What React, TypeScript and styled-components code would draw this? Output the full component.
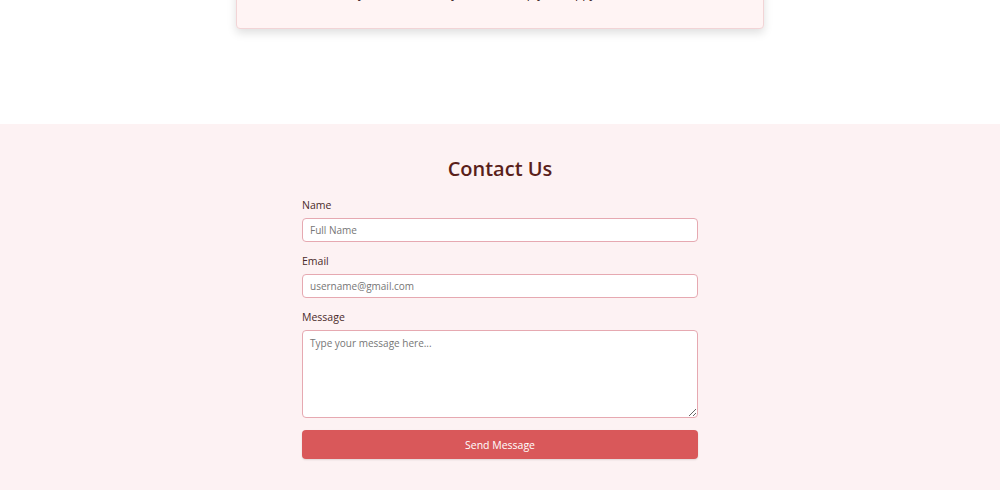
import React from "react";
import styled, { createGlobalStyle } from "styled-components";

const Global = createGlobalStyle`
  html, body { margin: 0; padding: 0; background: #ffffff; }
  body { font-family: "Open Sans", "Noto Sans", sans-serif; overflow: hidden; }
  * { box-sizing: border-box; }
`;

const Page = styled.div`
  display: flex;
  flex-direction: column;
  margin-top: -109px;
`;

const TopArea = styled.section`
  display: flex;
  justify-content: center;
  padding-bottom: 95px;
`;

const Card = styled.div`
  width: 528px;
  height: 138px;
  background: #fff4f4;
  border: 1px solid #f2d4d6;
  border-radius: 4px;
  box-shadow: 0 4px 10px rgba(0, 0, 0, 0.13);
  display: flex;
  flex-direction: column;
  justify-content: flex-end;
  align-items: center;
  padding: 0 20px 26px;
`;

const CardText = styled.p`
  margin: 0;
  font-size: 12px;
  line-height: 16px;
  color: #3b2222;
  text-align: center;
  white-space: nowrap;
`;

const ContactSection = styled.section`
  background: #fdf2f3;
  padding: 32px 0 40px;
  display: flex;
  flex-direction: column;
  align-items: center;
`;

const Title = styled.h2`
  margin: 0 0 15px;
  font-size: 20px;
  line-height: 26px;
  font-weight: 600;
  color: #5a1f1a;
`;

const Form = styled.form`
  width: 396px;
  display: flex;
  flex-direction: column;
`;

const Field = styled.div`
  display: flex;
  flex-direction: column;
  margin-bottom: 11px;
`;

const Label = styled.label`
  font-size: 10.5px;
  line-height: 16px;
  color: #4a2a2a;
  margin-bottom: 5px;
`;

const inputBase = `
  width: 100%;
  border: 1px solid #e6a9b1;
  border-radius: 4px;
  background: #ffffff;
  font-family: "Open Sans", "Noto Sans", sans-serif;
  font-size: 10px;
  color: #333;
  padding: 0 7px;
  outline: none;
  &::placeholder { color: #767676; }
`;

const Input = styled.input`
  ${inputBase}
  height: 24px;
`;

const TextArea = styled.textarea`
  ${inputBase}
  display: block;
  height: 88px;
  padding-top: 5px;
  resize: vertical;
`;

const Button = styled.button`
  height: 29px;
  margin-top: 1px;
  border: none;
  border-radius: 4px;
  background: #d9585a;
  color: #ffffff;
  font-family: "Open Sans", "Noto Sans", sans-serif;
  font-size: 10.5px;
  cursor: pointer;
  box-shadow: 0 1px 2px rgba(0, 0, 0, 0.12);
`;

export default function App() {
  return (
    <>
      <Global />
      <Page>
        <TopArea>
          <Card>
            <CardText>
              Every treat is made by hand to keep you happy (and sweet)!
            </CardText>
          </Card>
        </TopArea>
        <ContactSection>
          <Title>Contact Us</Title>
          <Form onSubmit={(e) => e.preventDefault()}>
            <Field>
              <Label htmlFor="name">Name</Label>
              <Input id="name" placeholder="Full Name" />
            </Field>
            <Field>
              <Label htmlFor="email">Email</Label>
              <Input id="email" placeholder="username@gmail.com" />
            </Field>
            <Field>
              <Label htmlFor="msg">Message</Label>
              <TextArea id="msg" placeholder="Type your message here..." />
            </Field>
            <Button type="submit">Send Message</Button>
          </Form>
        </ContactSection>
      </Page>
    </>
  );
}
